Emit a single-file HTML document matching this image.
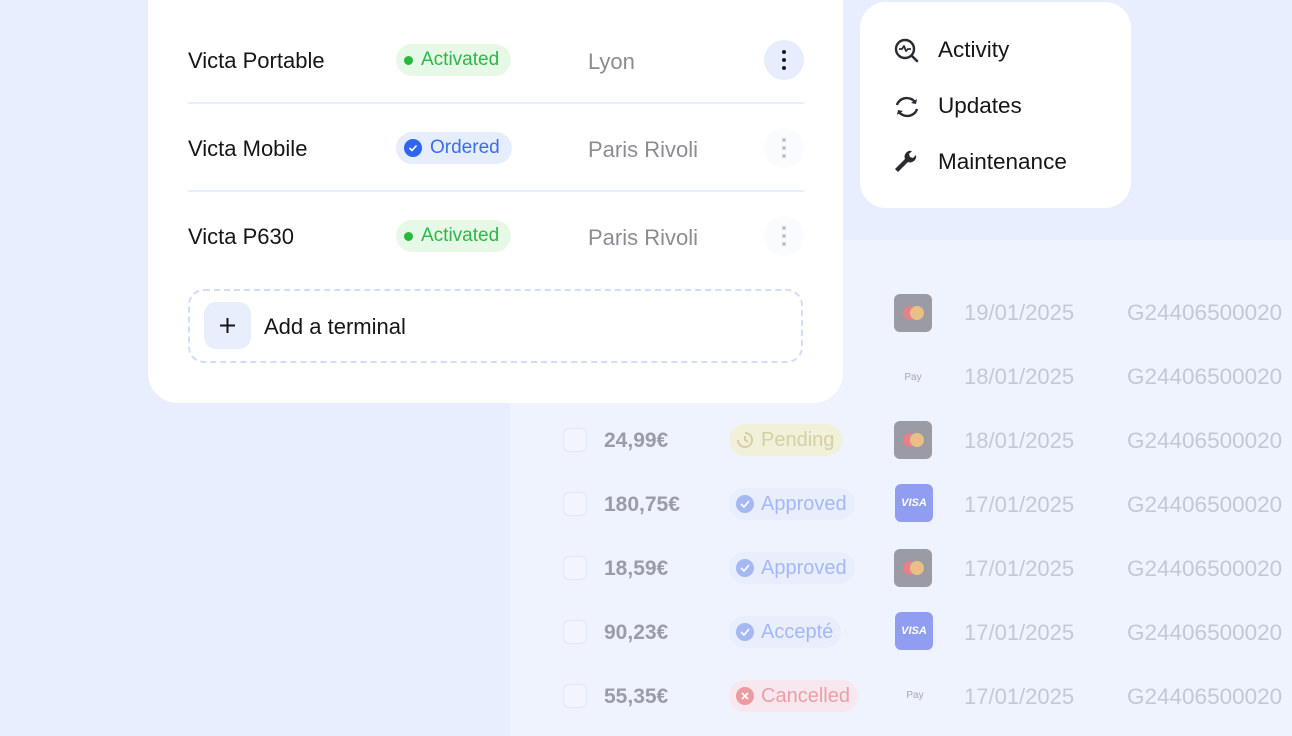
<!DOCTYPE html>
<html><head><meta charset="utf-8"><style>
*{margin:0;padding:0;box-sizing:border-box}
body{width:1292px;height:736px;overflow:hidden;background:#e8eefd;font-family:"Liberation Sans",sans-serif;position:relative}
.abs{position:absolute}
.panel{left:510px;top:240px;width:782px;height:496px;background:#eff3fd}
.t{position:absolute;font-size:21.5px;white-space:nowrap;line-height:24px}
.cb{position:absolute;width:24px;height:24px;border:1px solid #e3e7f1;border-radius:6px;background:#f2f5fd}
.amt{color:#9a9ca6;font-weight:bold;font-size:21px}
.date,.id{color:#c4c8d4;font-size:22px}
.id{font-size:22.5px}
.badge{position:absolute;height:32px;border-radius:16px;padding:0 8px 0 6px;display:flex;align-items:center;gap:6px;font-size:20px}
.card{position:absolute;width:38px;height:38px;border-radius:6px}
.mc{background:#9a9ba3}
.mc i{position:absolute;width:14px;height:14px;border-radius:50%;top:12px}
.visa{background:#8f9ef0;color:#fff;font-weight:bold;font-style:italic;font-size:11px;display:flex;align-items:center;justify-content:center}
.pay{color:#a6a8b2;font-size:10px;display:flex;align-items:center;justify-content:center}
.main{left:148px;top:-30px;width:695px;height:433px;background:#fff;border-radius:30px}
.name{position:absolute;left:188px;font-size:22px;color:#15161a}
.loc{position:absolute;left:588px;font-size:22px;color:#8a8c94}
.sep{position:absolute;left:188px;width:616px;height:2px;background:#e6edfb}
.sb{position:absolute;left:396px;height:32px;border-radius:16px;display:flex;align-items:center;font-size:19px;padding:0 12px 0 8px;gap:8px}
.dots{position:absolute;left:764px;width:40px;height:40px;border-radius:50%;display:flex;flex-direction:column;align-items:center;justify-content:center;gap:4px}
.dots i{width:4px;height:4px;border-radius:50%;display:block}
.menu{left:860px;top:2px;width:271px;height:206px;background:#fff;border-radius:26px}
.mi{position:absolute;left:938px;font-size:22.5px;color:#15161a}
</style></head><body>
<div class="abs panel"></div>
<div class="card mc" style="left:894px;top:294px"><i style="left:9px;background:#e4828c"></i><i style="left:16px;background:#eabf85"></i></div>
<div class="t date" style="left:964px;top:301px">19/01/2025</div><div class="t id" style="left:1127px;top:301px">G24406500020</div>
<div class="card pay" style="left:894px;top:358px"> Pay</div>
<div class="t date" style="left:964px;top:365px">18/01/2025</div><div class="t id" style="left:1127px;top:365px">G24406500020</div>

<div class="cb" style="left:563px;top:428px"></div><div class="t amt" style="left:604px;top:429px">24,99€</div>
<div class="badge" style="left:729px;top:424px;background:#f1f0d8;color:#d5cfa6"><svg width="20" height="20" viewBox="0 0 20 20"><path d="M10 3a7 7 0 1 1-7 7M10 6v4l3 2" stroke="#d7cfa3" stroke-width="2" fill="none"/></svg>Pending</div>
<div class="card mc" style="left:894px;top:421px"><i style="left:9px;background:#e4828c"></i><i style="left:16px;background:#eabf85"></i></div>
<div class="t date" style="left:964px;top:429px">18/01/2025</div><div class="t id" style="left:1127px;top:429px">G24406500020</div>

<div class="cb" style="left:563px;top:492px"></div><div class="t amt" style="left:604px;top:493px">180,75€</div>
<div class="badge" style="left:729px;top:488px;background:#e8eefc;color:#a5b7f5"><svg width="20" height="20"><circle cx="10" cy="10" r="9" fill="#a6b8f4"/><path d="M6 10l3 3 5-6" stroke="#fff" stroke-width="1.6" fill="none"/></svg>Approved</div>
<div class="card visa" style="left:895px;top:484px">VISA</div>
<div class="t date" style="left:964px;top:493px">17/01/2025</div><div class="t id" style="left:1127px;top:493px">G24406500020</div>

<div class="cb" style="left:563px;top:556px"></div><div class="t amt" style="left:604px;top:557px">18,59€</div>
<div class="badge" style="left:729px;top:552px;background:#e8eefc;color:#a5b7f5"><svg width="20" height="20"><circle cx="10" cy="10" r="9" fill="#a6b8f4"/><path d="M6 10l3 3 5-6" stroke="#fff" stroke-width="1.6" fill="none"/></svg>Approved</div>
<div class="card mc" style="left:894px;top:549px"><i style="left:9px;background:#e4828c"></i><i style="left:16px;background:#eabf85"></i></div>
<div class="t date" style="left:964px;top:557px">17/01/2025</div><div class="t id" style="left:1127px;top:557px">G24406500020</div>

<div class="cb" style="left:563px;top:620px"></div><div class="t amt" style="left:604px;top:621px">90,23€</div>
<div class="badge" style="left:729px;top:616px;background:#e8eefc;color:#a5b7f5"><svg width="20" height="20"><circle cx="10" cy="10" r="9" fill="#a6b8f4"/><path d="M6 10l3 3 5-6" stroke="#fff" stroke-width="1.6" fill="none"/></svg>Accepté</div>
<div class="card visa" style="left:895px;top:612px">VISA</div>
<div class="t date" style="left:964px;top:621px">17/01/2025</div><div class="t id" style="left:1127px;top:621px">G24406500020</div>

<div class="cb" style="left:563px;top:684px"></div><div class="t amt" style="left:604px;top:685px">55,35€</div>
<div class="badge" style="left:729px;top:680px;background:#f6e8ee;color:#eaa0a6"><svg width="20" height="20"><circle cx="10" cy="10" r="9" fill="#eb9ca2"/><path d="M7 7l6 6M13 7l-6 6" stroke="#fff" stroke-width="1.6"/></svg>Cancelled</div>
<div class="card pay" style="left:896px;top:676px"> Pay</div>
<div class="t date" style="left:964px;top:685px">17/01/2025</div><div class="t id" style="left:1127px;top:685px">G24406500020</div>

<div class="abs main"></div>
<div class="t name" style="top:49px">Victa Portable</div>
<div class="sb" style="top:44px;background:#e6f9e6;color:#2fb54a"><i style="width:9px;height:9px;border-radius:50%;background:#26b93b;display:block"></i>Activated</div>
<div class="t loc" style="top:50px">Lyon</div>
<div class="dots" style="top:40px;background:#e6edfc"><i style="background:#1a1b20"></i><i style="background:#1a1b20"></i><i style="background:#1a1b20"></i></div>
<div class="sep" style="top:102px"></div>
<div class="t name" style="top:137px">Victa Mobile</div>
<div class="sb" style="top:132px;background:#e6edfc;color:#3a6df0"><svg width="18" height="18"><circle cx="9" cy="9" r="9" fill="#2f66ee"/><path d="M5.5 9l2.5 2.5 4.5-5" stroke="#fff" stroke-width="1.6" fill="none"/></svg>Ordered</div>
<div class="t loc" style="top:138px">Paris Rivoli</div>
<div class="dots" style="top:128px;background:#fafbfe"><i style="background:#c2c4cc"></i><i style="background:#c2c4cc"></i><i style="background:#c2c4cc"></i></div>
<div class="sep" style="top:190px"></div>
<div class="t name" style="top:225px">Victa P630</div>
<div class="sb" style="top:220px;background:#e6f9e6;color:#2fb54a"><i style="width:9px;height:9px;border-radius:50%;background:#26b93b;display:block"></i>Activated</div>
<div class="t loc" style="top:226px">Paris Rivoli</div>
<div class="dots" style="top:216px;background:#fafbfe"><i style="background:#c2c4cc"></i><i style="background:#c2c4cc"></i><i style="background:#c2c4cc"></i></div>
<div class="abs" style="left:188px;top:289px;width:615px;height:74px;border:2px dashed #d3ddfa;border-radius:16px"></div>
<div class="abs" style="left:204px;top:302px;width:47px;height:47px;border-radius:12px;background:#e8eefc"><svg width="47" height="47"><path d="M23.5 16v15M16 23.5h15" stroke="#15161a" stroke-width="2"/></svg></div>
<div class="t" style="left:264px;top:315px;font-size:22px;color:#15161a">Add a terminal</div>

<div class="abs menu"></div>
<svg class="abs" style="left:893px;top:37px" width="28" height="28" viewBox="0 0 28 28"><circle cx="12" cy="12" r="9" stroke="#2a2b30" stroke-width="2.4" fill="none"/><path d="M19 19l5 5" stroke="#2a2b30" stroke-width="2.6" stroke-linecap="round"/><path d="M6 12h3l2-3 2 5 2-2h3" stroke="#2a2b30" stroke-width="1.8" fill="none" stroke-linejoin="round"/></svg>
<div class="t mi" style="top:38px">Activity</div>
<svg class="abs" style="left:893px;top:93px" width="28" height="28" viewBox="0 0 28 28"><path d="M4 12a10 9 0 0 1 18-3" stroke="#2a2b30" stroke-width="2.4" fill="none"/><path d="M24 6l-1 5-5-1z" fill="#2a2b30"/><path d="M24 16a10 9 0 0 1-18 3" stroke="#2a2b30" stroke-width="2.4" fill="none"/><path d="M4 22l1-5 5 1z" fill="#2a2b30"/></svg>
<div class="t mi" style="top:94px">Updates</div>
<svg class="abs" style="left:893px;top:148px" width="28" height="28" viewBox="0 0 28 28"><path d="M5 24l10-10a6 6 0 0 0 8-7l-3 3-3-1-1-3 3-3a6 6 0 0 0-7 8L2 21z" fill="#2a2b30"/></svg>
<div class="t mi" style="top:150px">Maintenance</div>
</body></html>
